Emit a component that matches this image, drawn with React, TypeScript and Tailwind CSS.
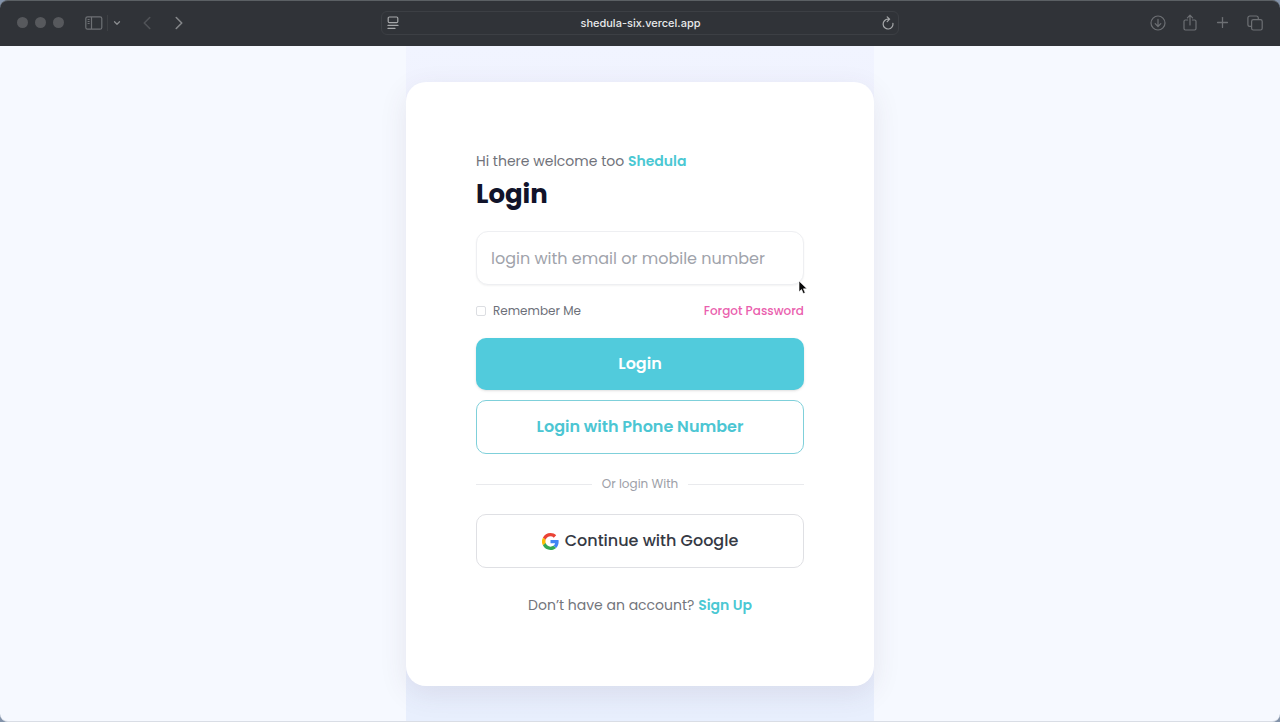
import React from 'react';
import { ChevronDown, ChevronLeft, ChevronRight, Plus } from 'lucide-react';

function TopBar() {
  return (
    <header className="grid h-[46px] shrink-0 grid-cols-[1fr_minmax(0,518px)_1fr] items-center rounded-t-lg border-t border-[#5b6064] bg-[#303338] pb-0.5 text-[#6d7074]">
      <div className="flex items-center pl-[17px]">
        <div className="flex gap-[7px]">
          <span className="size-[11px] rounded-full bg-[#57595d]" />
          <span className="size-[11px] rounded-full bg-[#57595d]" />
          <span className="size-[11px] rounded-full bg-[#57595d]" />
        </div>
        <button type="button" aria-label="Sidebar" className="ml-[21px]">
          <svg width="18" height="14" viewBox="0 0 18 14" fill="none" stroke="currentColor" strokeWidth="1.2">
            <rect x="0.8" y="0.8" width="16" height="12.4" rx="1.8" />
            <path d="M6.5 1v12M2.6 3.5h2M2.6 5.5h2M2.6 7.5h2" />
          </svg>
        </button>
        <span className="ml-1 h-4 w-px bg-[#3d4044]" />
        <button type="button" aria-label="Tab groups" className="ml-1 text-[#8b8d90]">
          <ChevronDown size={10} strokeWidth={3} />
        </button>
        <button type="button" aria-label="Back" className="ml-[14px] text-[#515458]">
          <ChevronLeft size={22} strokeWidth={1.7} />
        </button>
        <button type="button" aria-label="Forward" className="ml-[10px] text-[#85878a]">
          <ChevronRight size={22} strokeWidth={1.7} />
        </button>
      </div>
      <div className="flex h-6 items-center justify-between rounded-md border border-[#3c3f44] pl-[5px] pr-1 font-['Inter',sans-serif] text-[#a5a7a9]">
        <button type="button" aria-label="Page menu">
          <svg width="12" height="14" viewBox="0 0 12 14" fill="none" stroke="currentColor" strokeWidth="1.2" strokeLinecap="round">
            <rect x="1.2" y="1" width="9.6" height="5.6" rx="1.2" />
            <path d="M1 9.4h10M1 12.4h7" />
          </svg>
        </button>
        <span className="text-[11px] font-medium leading-4 text-[#e8e9ea]">shedula-six.vercel.app</span>
        <button type="button" aria-label="Reload">
          <svg width="12" height="14" viewBox="0 0 12 14" fill="none" stroke="currentColor" strokeWidth="1.2" strokeLinecap="round" strokeLinejoin="round">
            <path d="M10.9 7.4A4.9 4.9 0 1 1 6 3.2h1.2M5.2 0.8l2.4 2.4-2.4 2.4" />
          </svg>
        </button>
      </div>
      <div className="flex items-center justify-end gap-4 pr-[17px]">
        <button type="button" aria-label="Downloads">
          <svg width="16" height="16" viewBox="0 0 16 16" fill="none" stroke="currentColor" strokeWidth="1.2" strokeLinecap="round" strokeLinejoin="round">
            <circle cx="8" cy="8" r="7" />
            <path d="M8 4.4v7M5.2 8.7L8 11.5l2.8-2.8" />
          </svg>
        </button>
        <button type="button" aria-label="Share">
          <svg width="16" height="18" viewBox="0 0 16 18" fill="none" stroke="currentColor" strokeWidth="1.2" strokeLinecap="round" strokeLinejoin="round">
            <path d="M5.6 6H3.4A1.4 1.4 0 0 0 2 7.4v7.2A1.4 1.4 0 0 0 3.4 16h9.2a1.4 1.4 0 0 0 1.4-1.4V7.4A1.4 1.4 0 0 0 12.6 6h-2.2M8 11V1.4M5.4 3.8L8 1.2l2.6 2.6" />
          </svg>
        </button>
        <button type="button" aria-label="New tab">
          <Plus size={17} strokeWidth={1.8} />
        </button>
        <button type="button" aria-label="Tab overview">
          <svg width="16" height="16" viewBox="0 0 16 16" fill="none" stroke="currentColor" strokeWidth="1.2">
            <rect x="4.6" y="4.6" width="10.6" height="10.4" rx="1.8" />
            <path d="M4.4 11.3H2.8A1.9 1.9 0 0 1 0.9 9.4V2.9A1.9 1.9 0 0 1 2.8 1h6.6a1.9 1.9 0 0 1 1.9 1.9v1.5" />
          </svg>
        </button>
      </div>
    </header>
  );
}

function GoogleMark() {
  return (
    <svg width="17" height="17" viewBox="0 0 48 48" aria-hidden="true">
      <path fill="#EA4335" d="M24 9.5c3.54 0 6.71 1.22 9.21 3.6l6.85-6.85C35.9 2.38 30.47 0 24 0 14.62 0 6.51 5.38 2.56 13.22l7.98 6.19C12.43 13.72 17.74 9.5 24 9.5z" />
      <path fill="#4285F4" d="M46.98 24.55c0-1.57-.15-3.09-.38-4.55H24v9.02h12.94c-.58 2.96-2.26 5.48-4.78 7.18l7.73 6c4.51-4.18 7.09-10.36 7.09-17.65z" />
      <path fill="#FBBC05" d="M10.53 28.59a14.5 14.5 0 0 1 0-9.18l-7.98-6.19a24 24 0 0 0 0 21.56l7.98-6.19z" />
      <path fill="#34A853" d="M24 48c6.48 0 11.93-2.13 15.89-5.81l-7.73-6c-2.15 1.45-4.92 2.3-8.16 2.3-6.26 0-11.57-4.22-13.47-9.91l-7.98 6.19C6.51 42.62 14.62 48 24 48z" />
    </svg>
  );
}

function Pointer() {
  return (
    <svg className="absolute -right-1 top-[49px]" width="10" height="15" viewBox="0 0 10 15" aria-hidden="true">
      <path d="M1 1v10.8l2.5-2.3 1.8 4.1 1.9-.8-1.8-4H9z" fill="#0a0a0a" stroke="#fff" strokeWidth="0.6" />
    </svg>
  );
}

export default function App() {
  return (
    <div className="flex min-h-screen flex-col bg-[#8393aa] font-['Poppins','Inter',sans-serif]">
      <TopBar />
      <main className="flex flex-1 justify-center rounded-b-lg border-b border-[#d9dde5] bg-[#f6f9ff]">
        <div className="flex w-full max-w-[468px] flex-col bg-linear-to-b from-[#f1f4ff] via-[#ececfc] to-[#e8effd] pb-[35px] pt-9">
          <section className="rounded-[20px] bg-white px-[70px] pb-[69px] pt-[67px] shadow-[0_8px_28px_rgba(80,60,90,0.10)]">
            <p className="text-sm leading-6 text-[#70727a]">
              Hi there welcome too <span className="font-semibold text-[#4bc8d3]">Shedula</span>
            </p>
            <h1 className="mt-[3px] text-[26px] font-bold leading-9 text-[#11132a]">Login</h1>
            <form className="mt-[19px]" onSubmit={(e) => e.preventDefault()}>
              <div className="relative">
                <input
                  type="text"
                  aria-label="Email or mobile number"
                  placeholder="login with email or mobile number"
                  className="block h-[54px] w-full rounded-xl border border-[#eeeff2] bg-white px-[14px] text-base text-gray-700 shadow-xs outline-none placeholder:text-[#a0a3ab]"
                />
                <Pointer />
              </div>
              <div className="mt-4 flex items-center justify-between text-xs leading-5">
                <label className="flex items-center gap-[7px] text-[#6d7079]">
                  <input type="checkbox" className="size-[10px] appearance-none rounded-xs border border-[#dcdee2] bg-white" />
                  Remember Me
                </label>
                <a href="#forgot" className="font-medium text-[#ea5fae]">Forgot Password</a>
              </div>
              <button type="submit" className="mt-[17px] block h-[52px] w-full rounded-[10px] bg-[#51cbdc] text-base font-semibold text-white shadow-sm">
                Login
              </button>
              <button type="button" className="mt-[10px] block h-[54px] w-full rounded-[10px] border border-[#7fd0da] bg-white text-base font-semibold text-[#4cc6d3]">
                Login with Phone Number
              </button>
            </form>
            <div className="my-5 flex items-center gap-[10px] text-xs leading-5 text-[#9da0a8]">
              <span className="h-px flex-1 bg-[#e9eaed]" />
              Or login With
              <span className="h-px flex-1 bg-[#e9eaed]" />
            </div>
            <button type="button" className="flex h-[54px] w-full items-center justify-center gap-[6px] rounded-[10px] border border-[#dfe0e4] bg-white text-base font-medium text-[#353944]">
              <GoogleMark />
              Continue with Google
            </button>
            <p className="mt-[25px] text-center text-sm leading-6 text-[#73757c]">
              Don’t have an account? <a href="#signup" className="font-semibold text-[#4bc8d3]">Sign Up</a>
            </p>
          </section>
        </div>
      </main>
    </div>
  );
}
